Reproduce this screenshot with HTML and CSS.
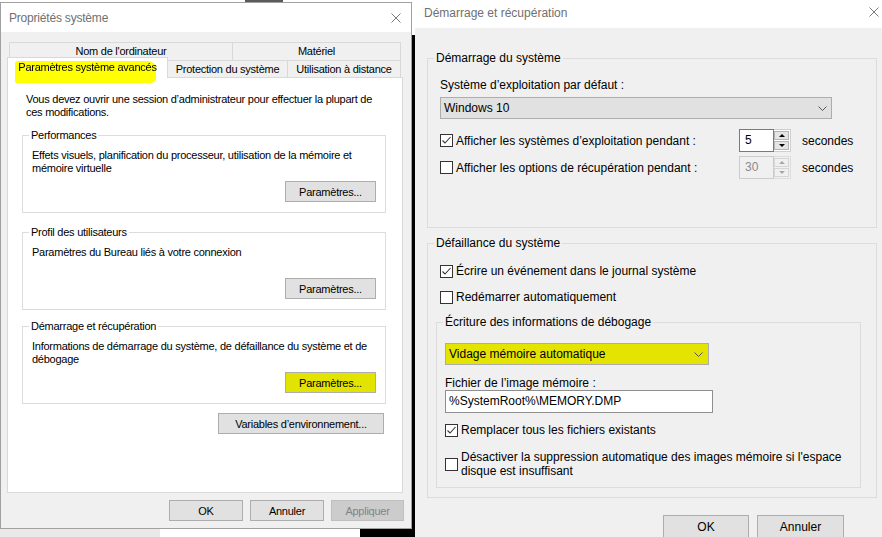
FILE: index.html
```html
<!DOCTYPE html>
<html lang="fr">
<head>
<meta charset="utf-8">
<title>Propriétés système</title>
<link rel="stylesheet" href="styles.css">
</head>
<body>
<div class="desktop">
  <div class="bg-dark-top"></div>
  <div class="bg-gap"></div>
  <div class="bg-bottom-gray"></div>
  <div class="bg-bottom-black"></div>

  <section class="win win-left">
    <header class="titlebar tb-left">
      <span class="title">Propriétés système</span>
      <svg class="close" width="10" height="10" viewBox="0 0 10 10"><path d="M0.5 0.5L9.5 9.5M9.5 0.5L0.5 9.5" stroke="#7a7a7a" stroke-width="1" fill="none"/></svg>
    </header>
    <div class="lbody">
      <div class="tabs">
        <div class="tabrow row-back">
          <div class="tab tab-name">Nom de l'ordinateur</div>
          <div class="tab tab-hw">Matériel</div>
        </div>
        <div class="tabrow row-front">
          <div class="tab tab-sel">Paramètres système avancés<span class="marker"></span></div>
          <div class="tab tab-prot">Protection du système</div>
          <div class="tab tab-remote">Utilisation à distance</div>
        </div>
      </div>
      <div class="panel">
        <p class="intro">Vous devez ouvrir une session d’administrateur pour effectuer la plupart de<br>ces modifications.</p>

        <div class="lgrp lg1">
          <div class="gtitle"><span>Performances</span></div>
          <p class="gtext">Effets visuels, planification du processeur, utilisation de la mémoire et<br>mémoire virtuelle</p>
          <div class="gact"><button class="btn btn-param">Paramètres...</button></div>
        </div>

        <div class="lgrp lg2">
          <div class="gtitle"><span>Profil des utilisateurs</span></div>
          <p class="gtext">Paramètres du Bureau liés à votre connexion</p>
          <div class="gact"><button class="btn btn-param">Paramètres...</button></div>
        </div>

        <div class="lgrp lg3">
          <div class="gtitle"><span>Démarrage et récupération</span></div>
          <p class="gtext">Informations de démarrage du système, de défaillance du système et de<br>débogage</p>
          <div class="gact"><button class="btn btn-param btn-marked">Paramètres...</button></div>
        </div>

        <button class="btn btn-env">Variables d’environnement...</button>
      </div>
      <div class="dlg-btns lbtns">
        <button class="btn lb-ok">OK</button>
        <button class="btn lb-cancel">Annuler</button>
        <button class="btn lb-apply btn-disabled">Appliquer</button>
      </div>
    </div>
  </section>

  <section class="win win-right">
    <header class="titlebar tb-right">
      <span class="title">Démarrage et récupération</span>
      <svg class="close" width="10" height="10" viewBox="0 0 10 10"><path d="M0.5 0.5L9.5 9.5M9.5 0.5L0.5 9.5" stroke="#7a7a7a" stroke-width="1" fill="none"/></svg>
    </header>
    <div class="rbody">
      <div class="rgrp rg1">
        <div class="gtitle"><span>Démarrage du système</span></div>
        <div class="label l-os">Système d’exploitation par défaut :</div>
        <div class="combo c-os"><span>Windows 10</span><svg class="chev" width="9" height="5" viewBox="0 0 9 5"><path d="M0.5 0.5L4.5 4.5L8.5 0.5" fill="none" stroke="#555" stroke-width="1"/></svg></div>
        <div class="spinrow sr1">
          <span class="chk"><svg width="11" height="11" viewBox="0 0 11 11"><path d="M1.5 5.5L4 8L9.5 2" fill="none" stroke="#333" stroke-width="1.1"/></svg></span>
          <span class="chk-label spin-label">Afficher les systèmes d’exploitation pendant :</span>
          <div class="spin">
            <span class="spin-val">5</span>
            <span class="spin-btns"><span class="sb"><i class="tri-up"></i></span><span class="sb"><i class="tri-down"></i></span></span>
          </div>
          <span class="unit">secondes</span>
        </div>
        <div class="spinrow sr2">
          <span class="chk"></span>
          <span class="chk-label spin-label">Afficher les options de récupération pendant :</span>
          <div class="spin spin-off">
            <span class="spin-val">30</span>
            <span class="spin-btns"><span class="sb"><i class="tri-up"></i></span><span class="sb"><i class="tri-down"></i></span></span>
          </div>
          <span class="unit">secondes</span>
        </div>
      </div>

      <div class="rgrp rg2">
        <div class="gtitle"><span>Défaillance du système</span></div>
        <div class="chkrow cr-log">
          <span class="chk"><svg width="11" height="11" viewBox="0 0 11 11"><path d="M1.5 5.5L4 8L9.5 2" fill="none" stroke="#333" stroke-width="1.1"/></svg></span>
          <span class="chk-label">Écrire un événement dans le journal système</span>
        </div>
        <div class="chkrow cr-restart">
          <span class="chk"></span>
          <span class="chk-label">Redémarrer automatiquement</span>
        </div>

        <div class="rgrp rg-dbg">
          <div class="gtitle"><span>Écriture des informations de débogage</span></div>
          <div class="combo c-dump combo-marked"><span>Vidage mémoire automatique</span><svg class="chev" width="9" height="5" viewBox="0 0 9 5"><path d="M0.5 0.5L4.5 4.5L8.5 0.5" fill="none" stroke="#555" stroke-width="1"/></svg></div>
          <div class="label l-file">Fichier de l’image mémoire :</div>
          <div class="textbox inp-file">%SystemRoot%\MEMORY.DMP</div>
          <div class="chkrow cr-replace">
            <span class="chk"><svg width="11" height="11" viewBox="0 0 11 11"><path d="M1.5 5.5L4 8L9.5 2" fill="none" stroke="#333" stroke-width="1.1"/></svg></span>
            <span class="chk-label">Remplacer tous les fichiers existants</span>
          </div>
          <div class="chkrow cr-disable">
            <span class="chk"></span>
            <span class="chk-label two-lines">Désactiver la suppression automatique des images mémoire si l'espace<br>disque est insuffisant</span>
          </div>
        </div>
      </div>

      <div class="dlg-btns rbtns">
        <button class="btn rb-ok">OK</button>
        <button class="btn rb-cancel">Annuler</button>
      </div>
    </div>
  </section>
</div>
</body>
</html>
```

FILE: styles.css
```css
* { box-sizing: border-box; }
html, body { margin: 0; padding: 0; }
body {
  width: 882px;
  height: 537px;
  overflow: hidden;
  font-family: "Liberation Sans", Arial, sans-serif;
  color: #000;
  background: #fff;
}
p { margin: 0; }

.desktop { position: relative; width: 882px; height: 537px; overflow: hidden; background: #fff; }
.bg-dark-top { position: absolute; left: 245px; top: 0; width: 38px; height: 2px; background: #5a5a5a; }
.bg-gap { position: absolute; left: 412px; top: 35px; width: 3px; height: 502px; background: #000; }
.bg-bottom-gray { position: absolute; left: 0; top: 529px; width: 160px; height: 8px; background: #e9e9e9; }
.bg-bottom-black { position: absolute; left: 360px; top: 529px; width: 55px; height: 8px; background: #000; }

/* windows */
.win { position: absolute; display: flex; flex-direction: column; background: #f0f0f0; }
.titlebar { display: flex; background: #fff; flex: 0 0 auto; }
.title { color: #707070; font-size: 12px; letter-spacing: 0; white-space: nowrap; }
.close { margin-left: auto; flex: 0 0 auto; }

.win-left {
  left: 0; top: 2px;
  width: 412px; height: 527px;
  border: 1px solid #a0a0a0;
  font-size: 11px;
  letter-spacing: -0.25px;
}
.tb-left { height: 29px; align-items: center; padding: 0 10px 0 8px; }
.tb-left .title { letter-spacing: -0.2px; }

.lbody { display: flex; flex-direction: column; padding-top: 10px; flex: 1 1 auto; }

/* tabs */
.tabs { display: flex; flex-direction: column; }
.tabrow { display: flex; }
.tab {
  border: 1px solid #d9d9d9;
  border-bottom: none;
  background: #f0f0f0;
  text-align: center;
  white-space: nowrap;
}
.row-back { height: 18px; padding-left: 8px; }
.row-back .tab { height: 18px; line-height: 17px; }
.tab-name { width: 224px; }
.tab-hw { width: 169px; margin-left: -1px; }
.row-front { height: 17px; align-items: flex-end; padding-left: 6px; }
.row-front .tab { height: 17px; line-height: 16px; }
.row-front .tab-sel {
  position: relative;
  z-index: 2;
  width: 161px;
  height: 21px;
  margin-bottom: -1px;
  background: #fff;
  line-height: 18px;
}
.tab-prot { width: 121px; margin-left: -1px; }
.tab-remote { width: 114px; margin-left: -1px; }
.marker {
  position: absolute;
  left: 7px; top: 3px;
  width: 141px; height: 22px;
  background: #ffff00;
  mix-blend-mode: multiply;
  border-radius: 3px 8px 5px 2px;
}

.panel {
  position: relative;
  z-index: 1;
  margin-left: 6px;
  width: 396px;
  height: 416px;
  border: 1px solid #d9d9d9;
  background: #fff;
}
.intro { margin: 15px 0 0 18px; line-height: 13px; white-space: nowrap; }

.lgrp {
  width: 364px;
  margin-left: 14px;
  border: 1px solid #dcdcdc;
  padding: 0 9px 10px 9px;
}
.lg1 { margin-top: 16px; }
.lg2 { margin-top: 19px; }
.lg3 { margin-top: 16px; }
.lgrp .gtitle { margin-top: -8px; height: 14px; line-height: 14px; margin-left: -3px; white-space: nowrap; }
.gtitle span { padding: 0 2px; }
.lgrp .gtitle span { background: #fff; }
.gtext { margin-top: 7px; line-height: 13px; height: 26px; white-space: nowrap; }
.gact { display: flex; justify-content: flex-end; margin-top: 6px; }

.btn {
  font-family: inherit;
  font-size: inherit;
  letter-spacing: inherit;
  color: #000;
  background: #e1e1e1;
  border: 1px solid #adadad;
  padding: 0;
  margin: 0;
  white-space: nowrap;
}
.btn-param { width: 91px; height: 21px; }
.btn-marked { background: #e3e300; }
.btn-env { display: block; margin: 9px 0 0 210px; width: 166px; height: 21px; }
.btn-disabled { background: #cccccc; border-color: #bfbfbf; color: #838383; }

.dlg-btns { display: flex; justify-content: flex-end; }
.lbtns { margin-top: 7px; gap: 7px; padding-right: 7px; }
.lbtns .btn { height: 21px; }
.lb-ok, .lb-cancel { width: 74px; }
.lb-apply { width: 73px; }

/* right window */
.win-right {
  left: 415px; top: 0;
  width: 467px; height: 537px;
  font-size: 12px;
}
.tb-right { height: 28px; align-items: flex-start; padding: 5px 3px 0 9px; }
.tb-right .title { line-height: 16px; }
.tb-right .close { margin-top: 2px; }

.rbody { padding: 0 5px 0 12px; }
.rgrp { border: 1px solid #dcdcdc; }
.rgrp .gtitle { margin-top: -9px; height: 16px; line-height: 16px; white-space: nowrap; }
.rgrp .gtitle span { background: #f0f0f0; }
.rg1 { margin-top: 30px; padding: 0 0 48px 12px; }
.rg1 > .gtitle, .rg2 > .gtitle { margin-left: -6px; }
.rg2 { margin-top: 15px; padding: 0 15px 9px 12px; }
.rg-dbg { margin-top: 17px; margin-left: -4px; padding: 0 0 9px 8px; }
.rg-dbg > .gtitle { margin-left: -2px; }

.label { white-space: nowrap; }
.l-os { margin-top: 11px; line-height: 16px; }
.combo {
  display: flex;
  align-items: center;
  background: #e1e1e1;
  border: 1px solid #adadad;
  padding-left: 3px;
  white-space: nowrap;
}
.combo .chev { margin-left: auto; margin-right: 4px; }
.c-os { margin-top: 4px; width: 392px; height: 22px; }
.c-dump { margin-top: 13px; width: 264px; height: 22px; }
.c-dump .chev { margin-right: 5px; }
.combo-marked { background: #e4e400; }

.chk {
  flex: 0 0 auto;
  width: 13px; height: 13px;
  border: 1px solid #333;
  background: #fff;
  display: flex;
  align-items: center;
  justify-content: center;
}
.chk-label { margin-left: 3px; white-space: nowrap; }

.spinrow { display: flex; align-items: center; height: 23px; }
.sr1 { margin-top: 10px; }
.sr2 { margin-top: 4px; }
.spin-label { flex: 0 0 283px; }
.spin { display: flex; width: 52px; height: 23px; }
.spin-val {
  width: 35px;
  border: 1px solid #7a7a7a;
  background: #fff;
  padding-left: 5px;
  line-height: 21px;
}
.spin-btns {
  width: 17px;
  border: 1px solid #cfcfcf;
  border-left: none;
  background: #fff;
  display: flex;
  flex-direction: column;
  gap: 1px;
  padding: 1px 1px 1px 0;
}
.sb {
  flex: 1 1 0;
  background: #e5e5e5;
  border: 1px solid #b5b5b5;
  display: flex;
  align-items: center;
  justify-content: center;
}
.tri-up { width: 0; height: 0; border-left: 3px solid transparent; border-right: 3px solid transparent; border-bottom: 3px solid #000; }
.tri-down { width: 0; height: 0; border-left: 3px solid transparent; border-right: 3px solid transparent; border-top: 3px solid #000; }
.spin-off .spin-val { border-color: #cccccc; background: #f0f0f0; color: #8a8a8a; }
.spin-off .spin-btns { border-color: #dcdcdc; background: #f0f0f0; }
.spin-off .sb { background: #f0f0f0; border-color: #d5d5d5; }
.spin-off .tri-up { border-bottom-color: #a8a8a8; }
.spin-off .tri-down { border-top-color: #a8a8a8; }
.unit { margin-left: 11px; white-space: nowrap; }

.chkrow { display: flex; align-items: center; height: 16px; }
.cr-log { margin-top: 12px; }
.cr-restart { margin-top: 10px; }
.cr-replace { margin-top: 9px; }
.cr-disable { margin-top: 12px; height: 28px; }
.two-lines { line-height: 14px; }

.l-file { margin-top: 11px; line-height: 14px; }
.textbox {
  background: #fff;
  border: 1px solid #8f8f8f;
  padding-left: 3px;
  line-height: 21px;
  white-space: nowrap;
}
.inp-file { width: 268px; height: 23px; }

.rbtns { margin-top: 17px; gap: 8px; padding-right: 33px; }
.rbtns .btn { height: 23px; }
.rb-ok { width: 86px; }
.rb-cancel { width: 87px; }
```
